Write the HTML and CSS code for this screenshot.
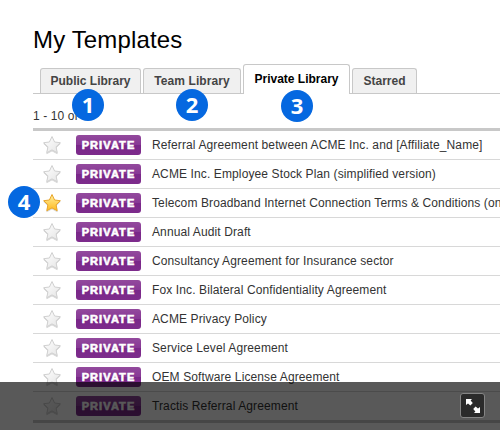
FILE: index.html
```html
<!DOCTYPE html>
<html lang="en">
<head>
<meta charset="utf-8">
<title>My Templates</title>
<link rel="stylesheet" href="styles.css">
</head>
<body>
<svg width="0" height="0" class="defs" aria-hidden="true">
  <defs>
    <linearGradient id="gray" x1="0" y1="0" x2="1" y2="1"><stop offset="0" stop-color="#fff"/><stop offset="1" stop-color="#e4e4e4"/></linearGradient>
    <linearGradient id="gold" x1="0" y1="0" x2="0" y2="1"><stop offset="0" stop-color="#fff0a0"/><stop offset="1" stop-color="#ffb91f"/></linearGradient>
    <path id="star" d="M10 1.5 L12.6 7 L18.3 7.7 L14.1 11.8 L15.2 17.7 L10 14.9 L4.8 17.7 L5.9 11.8 L1.7 7.7 L7.4 7Z" stroke-linejoin="round"/>
  </defs>
</svg>
<main class="page">
  <h1 class="title">My Templates</h1>
  <nav class="tabs">
    <div class="tab public">Public Library<span class="num">1</span></div>
    <div class="tab team">Team Library<span class="num">2</span></div>
    <div class="tab private active">Private Library<span class="num">3</span></div>
    <div class="tab starred">Starred</div>
  </nav>
  <p class="count">1 - 10 of</p>
  <div class="list">
    <div class="row"><svg class="star" viewBox="0 0 20 20"><use href="#star"/></svg><span class="badge">PRIVATE</span><span class="name">Referral Agreement between ACME Inc. and [Affiliate_Name]</span></div>
    <div class="row"><svg class="star" viewBox="0 0 20 20"><use href="#star"/></svg><span class="badge">PRIVATE</span><span class="name">ACME Inc. Employee Stock Plan (simplified version)</span></div>
    <div class="row"><span class="num side">4</span><svg class="star on" viewBox="0 0 20 20"><use href="#star"/></svg><span class="badge">PRIVATE</span><span class="name">Telecom Broadband Internet Connection Terms &amp; Conditions (online)</span></div>
    <div class="row"><svg class="star" viewBox="0 0 20 20"><use href="#star"/></svg><span class="badge">PRIVATE</span><span class="name">Annual Audit Draft</span></div>
    <div class="row"><svg class="star" viewBox="0 0 20 20"><use href="#star"/></svg><span class="badge">PRIVATE</span><span class="name">Consultancy Agreement for Insurance sector</span></div>
    <div class="row"><svg class="star" viewBox="0 0 20 20"><use href="#star"/></svg><span class="badge">PRIVATE</span><span class="name">Fox Inc. Bilateral Confidentiality Agreement</span></div>
    <div class="row"><svg class="star" viewBox="0 0 20 20"><use href="#star"/></svg><span class="badge">PRIVATE</span><span class="name">ACME Privacy Policy</span></div>
    <div class="row"><svg class="star" viewBox="0 0 20 20"><use href="#star"/></svg><span class="badge">PRIVATE</span><span class="name">Service Level Agreement</span></div>
    <div class="row"><svg class="star" viewBox="0 0 20 20"><use href="#star"/></svg><span class="badge">PRIVATE</span><span class="name">OEM Software License Agreement</span></div>
    <div class="row"><svg class="star" viewBox="0 0 20 20"><use href="#star"/></svg><span class="badge">PRIVATE</span><span class="name">Tractis Referral Agreement</span></div>
  </div>
</main>
<div class="overlay">
  <div class="expand"><svg width="14" height="14" viewBox="0 0 14 14" fill="#fff"><path d="M0 0H6L4.6 1.6L6.8 4L4.4 6.4L2 4.4L0 6Z"/><path d="M14 14H8L9.4 12.4L7.2 10L9.6 7.6L12 9.6L14 8Z"/></svg></div>
</div>
</body>
</html>
```
FILE: styles.css
```css
* { box-sizing: border-box; }
body {
  margin: 0;
  width: 500px;
  height: 430px;
  overflow: hidden;
  position: relative;
  background: #fff;
  color: #333;
  font: 12px/16px "Liberation Sans", Arial, sans-serif;
}
.defs { position: absolute; }
.page { padding: 24px 0 0 33px; }
.title {
  margin: 0;
  height: 40px;
  font-size: 24px;
  line-height: 32px;
  font-weight: 400;
  letter-spacing: .15px;
  color: #000;
}
.tabs {
  display: flex;
  align-items: flex-end;
  gap: 2px;
  height: 30px;
  padding-left: 7px;
  border-bottom: 1px solid #c8c8c8;
}
.tab {
  position: relative;
  height: 25px;
  line-height: 24px;
  text-align: center;
  white-space: nowrap;
  font-weight: 700;
  color: #444;
  background: #f0f0f0;
  border: 1px solid #c8c8c8;
  border-bottom: 0;
  border-radius: 3px 3px 0 0;
}
.public { width: 101px; }
.team { width: 98px; letter-spacing: .08px; }
.private { width: 107px; }
.starred { width: 65px; }
.active {
  height: 30px;
  margin-bottom: -1px;
  line-height: 28px;
  background: #fff;
  color: #000;
}
.num {
  position: absolute;
  z-index: 2;
  left: 31px;
  top: 20px;
  width: 32px;
  height: 32px;
  border-radius: 50%;
  background: #0568e0;
  color: #fff;
  font: 700 22px/30px "Open Sans", sans-serif;
  letter-spacing: 0;
  text-align: center;
}
.team .num { left: 32px; }
.private .num { left: 37px; top: 25px; }
.num.side { left: -25px; top: -3px; }
.count { margin: 0; height: 34px; padding-top: 14px; letter-spacing: .1px; }
.list { border-top: 3px solid #c8c8c8; border-bottom: 3px solid #c8c8c8; }
.row {
  position: relative;
  display: flex;
  align-items: center;
  height: 29px;
  padding-left: 9px;
  border-bottom: 1px solid #d8d8d8;
  white-space: nowrap;
}
.row:last-child { height: 28px; border-bottom: 0; }
.name { letter-spacing: .115px; }
.star {
  flex: none;
  width: 20px;
  height: 20px;
  margin-right: 14px;
  fill: url(#gray);
  stroke: #d0d0d0;
  filter: drop-shadow(0.5px 1px 0.5px rgba(0, 0, 0, .15));
}
.star.on { fill: url(#gold); stroke: #e8a52a; }
.badge {
  flex: none;
  width: 65px;
  height: 20px;
  margin-right: 11px;
  border-radius: 3px;
  background: linear-gradient(#934a9d 0, #873895 50%, #7a2789 50%, #7d2c8c 100%);
  color: #fff;
  font-size: 11px;
  line-height: 20px;
  font-weight: 700;
  letter-spacing: 1.1px;
  text-align: center;
  -webkit-text-stroke: .6px #fff;
}
.overlay {
  position: absolute;
  z-index: 3;
  inset: 382px 0 0 0;
  background: rgba(0, 0, 0, .65);
}
.expand {
  display: flex;
  align-items: center;
  justify-content: center;
  width: 25px;
  height: 25px;
  margin: 11px 0 0 460px;
  background: #2b2b2b;
  border: 1px solid #858585;
  border-radius: 3px;
}
```
